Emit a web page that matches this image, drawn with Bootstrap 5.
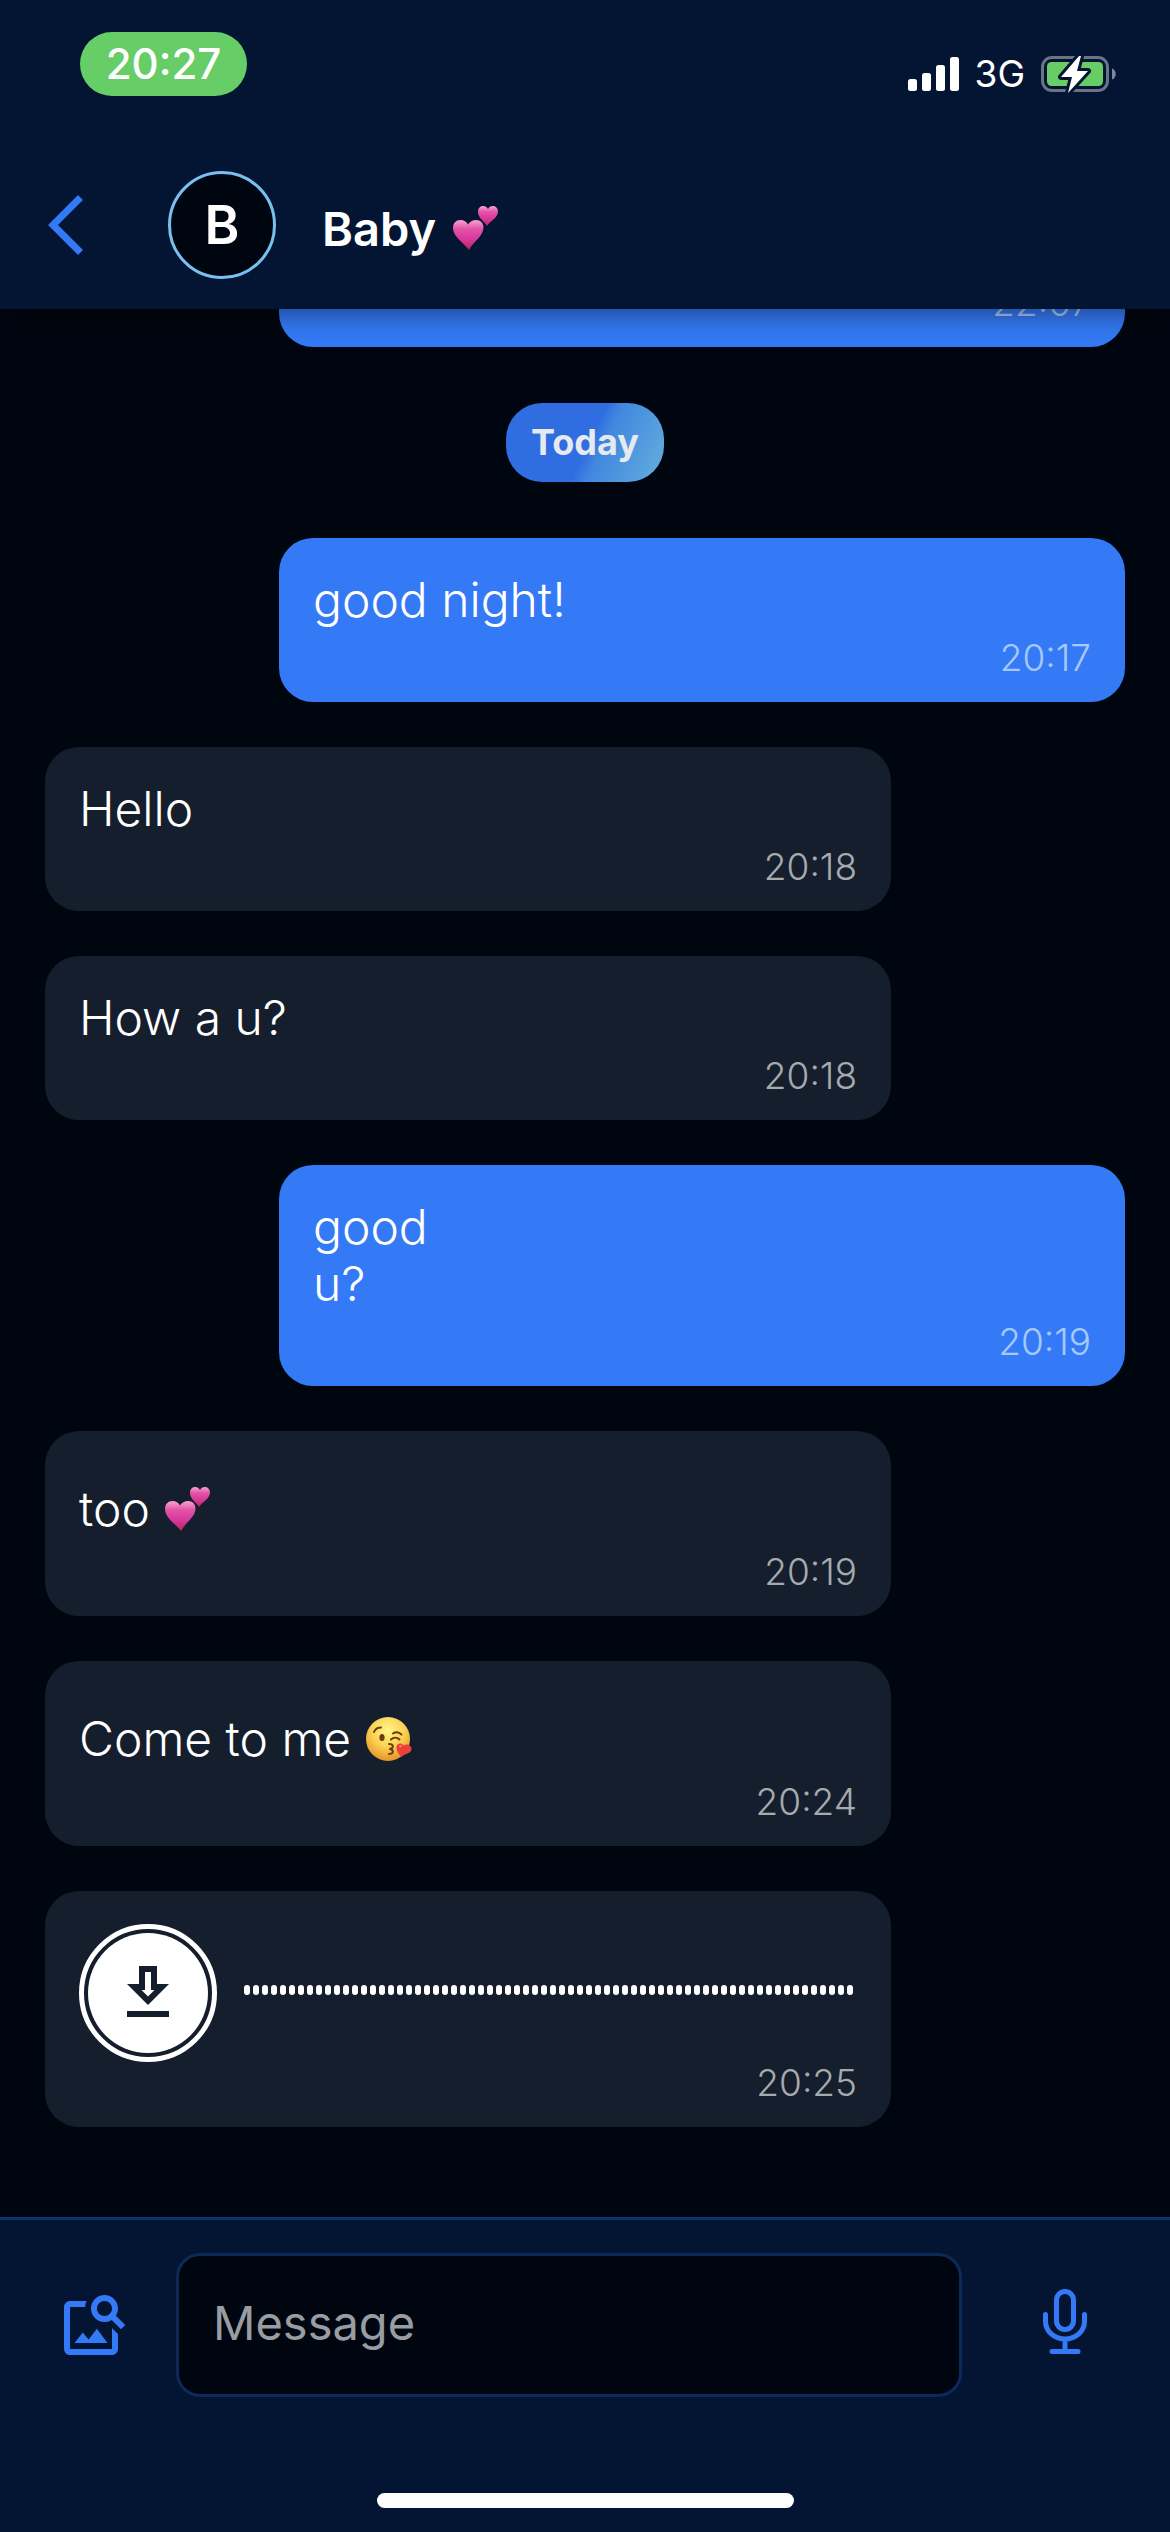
<!DOCTYPE html>
<html lang="en">
<head>
<meta charset="utf-8">
<meta name="viewport" content="width=device-width, initial-scale=1">
<title>Baby – Chat</title>
<link href="https://cdn.jsdelivr.net/npm/bootstrap@5.3.0/dist/css/bootstrap.min.css" rel="stylesheet">
<style>
  :root {
    --bg: #000610;
    --panel: #041533;
    --accent: #347af6;
    --incoming: #151e2c;
  }
  body { background: var(--bg); color: #fff; font-family: Inter, "Liberation Sans", sans-serif; }
  svg { display: block; flex: none; }

  .app-header { background: var(--panel); box-shadow: 0 0 30px rgba(0, 0, 0, .6); z-index: 2; }
  .status-bar { padding: 32px 53px 0 80px; height: 120px; }
  .clock-pill { background: #67cd67; border-radius: 32px; width: 167px; height: 64px; font-size: 42px; line-height: 64px; font-weight: 500; }
  .status-icons { gap: 16px; height: 84px; font-size: 37px; line-height: 44px; }
  .title-bar { padding: 51px 48px 30px; }
  .back-btn { width: 120px; }
  .avatar { width: 108px; height: 108px; border: 3px solid #78c0f0; background: var(--bg); font-size: 53px; line-height: 56px; font-weight: 600; }
  .contact-name { font-size: 47px; line-height: 57px; font-weight: 600; margin: 6px 0 0 46px; gap: 17px; }

  .chat { gap: 45px; padding-bottom: 90px; }
  .msg-row { width: 80%; padding: 0 45px; flex: none; }
  .bubble { border-radius: 34px; padding: 33px 34px 23px; background: var(--incoming); }
  .bubble-out { background: var(--accent); }
  .bubble-text { font-size: 48px; line-height: 57px; font-weight: 300; }
  .bubble-emoji { padding: 16px 0 5px; gap: 15px; }
  .bubble-time { font-size: 37px; line-height: 43px; font-weight: 300; margin-top: 8px; color: #a5aaaf; }
  .bubble-out .bubble-time { color: #a6c9fb; }
  .day-pill { margin: 11px 0; padding: 0 25px; border-radius: 36px; font-size: 36px; line-height: 79px; font-weight: 700; color: #e6e9ee;
    background: linear-gradient(115deg, #2f6de0 52%, #4187df 60%, #65afdd 100%); }

  .voice { gap: 27px; margin-bottom: -9px; }
  .download-btn { width: 138px; height: 138px; border: 5px solid #fff; padding: 4px; background: transparent; color: var(--incoming); }
  .download-disc { background: #fff; }
  .waveform { padding: 0 3px 7px 0; }

  .composer { background: var(--panel); border-top: 3px solid #10316b; padding: 33px 0 24px; }
  .composer-row { margin: 0 70px 96px 58px; gap: 46px; }
  .icon-btn { color: var(--accent); }
  .composer .form-control { height: 144px; border: 3px solid #0d2958; border-radius: 24px; background: var(--bg); color: #fff; font-size: 47px; line-height: 57px; padding: 0 34px 6px; }
  .composer .form-control::placeholder { color: #999ca1; opacity: 1; }
  .mic-btn { margin-left: 24px; }
  .home-bar { width: 417px; height: 15px; background: #fff; }
</style>
</head>
<body class="vh-100 d-flex flex-column overflow-hidden">

<svg width="0" height="0" class="position-absolute" aria-hidden="true">
  <defs>
    <linearGradient id="pink" x1="0" y1="0" x2="0" y2="1">
      <stop offset="0" stop-color="#f9a3d2"/><stop offset=".3" stop-color="#e254a8"/>
      <stop offset=".65" stop-color="#d9379b"/><stop offset="1" stop-color="#b32a55"/>
    </linearGradient>
    <radialGradient id="face" cx=".5" cy=".3" r=".75">
      <stop offset="0" stop-color="#fff58a"/><stop offset=".5" stop-color="#fbd153"/><stop offset="1" stop-color="#e18b22"/>
    </radialGradient>
    <symbol id="hearts" viewBox="0 0 45 44">
      <path fill="url(#pink)" d="M16 44C11 37 0 31 0 22c0-5 3-8 7.500-8 3.500 0 6 1.500 7.500 4.500C17 15.500 19.500 14 23 14c4.500 0 7.500 3 7.500 7.500C30.500 30 20 36 16 44z"/>
      <path fill="url(#pink)" d="M34 20c-2.500-4.500-9-8-9-14 0-3.500 2-6 5-6 2.300 0 4 1 5 3 1-2 2.700-3 5-3 3 0 5 2.500 5 5.500C45 12 37 15 34 20z"/>
    </symbol>
    <symbol id="kiss" viewBox="0 0 46 44">
      <circle cx="22" cy="22" r="22" fill="url(#face)"/>
      <ellipse cx="16" cy="20.500" rx="2.600" ry="3.500" fill="#6b3c0c"/>
      <g fill="none" stroke="#6b3c0c" stroke-width="2" stroke-linecap="round" stroke-linejoin="round">
        <path d="M8 15c1-2.500 4-4.500 7-4.500M27 16.500c3-2 6-1.500 8.500 1M25 22.500c2.500-2.500 6-2.500 8.500 0M23 27c5 0 5 4 1 5 4 1 4 5-1 5"/>
      </g>
      <path fill="#ea4238" d="M35 40c-2-3-5-6-4.500-10.500.5-3 4.500-4.500 7-1 3-2.500 8-.5 8 3.500 0 4.500-7 5-10.500 8z"/>
      <path fill="#ff8c80" d="M33 29c1-1 2.500-1 3 .5-1 1-2.500 1-3-.5z"/>
    </symbol>
  </defs>
</svg>

<header class="app-header position-relative">
  <div class="status-bar d-flex justify-content-between align-items-start">
    <div class="clock-pill text-center">20:27</div>
    <div class="status-icons d-flex align-items-center">
      <svg width="51" height="34" viewBox="0 0 51 34" fill="#fff" role="img" aria-label="Signal strength">
        <rect x="0" y="22" width="9" height="12" rx="2.500"/><rect x="14" y="16" width="9" height="18" rx="2.500"/>
        <rect x="28" y="8" width="9" height="26" rx="2.500"/><rect x="42" y="0" width="9" height="34" rx="2.500"/>
      </svg>
      <span>3G</span>
      <svg width="76" height="38" viewBox="0 0 76 38" role="img" aria-label="Battery charging">
        <rect x="1.500" y="2.500" width="65" height="33" rx="9.500" fill="none" stroke="#6b7487" stroke-width="3"/>
        <path fill="#7f8898" d="M71 13.500c5 1.500 5 9.500 0 11z"/>
        <rect x="6" y="7" width="56" height="24" rx="4.500" fill="#67cd67"/>
        <path d="M38 1 20 22h11l-4 16 20-22H36l4-15z" fill="#fff" stroke="#041533" stroke-width="6" stroke-linejoin="round" paint-order="stroke"/>
      </svg>
    </div>
  </div>
  <div class="title-bar d-flex align-items-center">
    <button type="button" class="back-btn btn p-0 border-0 rounded-0" aria-label="Back">
      <svg width="36" height="60" viewBox="0 0 36 60" fill="none" stroke="#347af6" stroke-width="7"><path d="M32.500 2.500 5 30l27.500 27.500"/></svg>
    </button>
    <div class="avatar rounded-circle d-flex align-items-center justify-content-center">B</div>
    <h1 class="contact-name mb-0 d-flex align-items-center">Baby
      <svg width="45" height="44" role="img" aria-label="two hearts"><use href="#hearts"/></svg>
    </h1>
  </div>
</header>

<main class="chat flex-grow-1 d-flex flex-column justify-content-end align-items-start overflow-hidden">
  <div class="msg-row align-self-end"><div class="bubble bubble-out">
    <div class="bubble-text">&nbsp;</div>
    <div class="bubble-time text-end">22:07</div>
  </div></div>

  <div class="day-pill align-self-center">Today</div>

  <div class="msg-row align-self-end"><div class="bubble bubble-out">
    <div class="bubble-text">good night!</div>
    <div class="bubble-time text-end">20:17</div>
  </div></div>

  <div class="msg-row"><div class="bubble">
    <div class="bubble-text">Hello</div>
    <div class="bubble-time text-end">20:18</div>
  </div></div>

  <div class="msg-row"><div class="bubble">
    <div class="bubble-text">How a u?</div>
    <div class="bubble-time text-end">20:18</div>
  </div></div>

  <div class="msg-row align-self-end"><div class="bubble bubble-out">
    <div class="bubble-text">good<br>u?</div>
    <div class="bubble-time text-end">20:19</div>
  </div></div>

  <div class="msg-row"><div class="bubble">
    <div class="bubble-text bubble-emoji d-flex align-items-center">too
      <svg width="45" height="44" role="img" aria-label="two hearts"><use href="#hearts"/></svg>
    </div>
    <div class="bubble-time text-end">20:19</div>
  </div></div>

  <div class="msg-row"><div class="bubble">
    <div class="bubble-text bubble-emoji d-flex align-items-center">Come to me
      <svg width="46" height="44" role="img" aria-label="face blowing a kiss"><use href="#kiss"/></svg>
    </div>
    <div class="bubble-time text-end">20:24</div>
  </div></div>

  <div class="msg-row"><div class="bubble">
    <div class="voice d-flex align-items-center">
      <button type="button" class="download-btn btn rounded-circle flex-shrink-0" aria-label="Download voice message">
        <span class="download-disc rounded-circle w-100 h-100 d-flex align-items-center justify-content-center">
          <svg width="72" height="72" viewBox="0 0 24 24" fill="currentColor"><path d="M19 9h-4V3H9v6H5l7 7 7-7zm-8 2V5h2v6h1.170L12 13.170 9.830 11H11zm-6 7h14v2H5z"/></svg>
        </span>
      </button>
      <div class="waveform flex-grow-1">
        <svg width="100%" height="10" aria-hidden="true">
          <defs><pattern id="dots" width="9" height="10" patternUnits="userSpaceOnUse"><rect width="6" height="10" rx="3" fill="#fff"/></pattern></defs>
          <rect width="100%" height="10" fill="url(#dots)"/>
        </svg>
      </div>
    </div>
    <div class="bubble-time text-end">20:25</div>
  </div></div>
</main>

<footer class="composer">
  <form class="composer-row d-flex align-items-center">
    <button type="button" class="icon-btn btn p-0 border-0" aria-label="Attach image">
      <svg width="72" height="72" viewBox="0 0 24 24" fill="currentColor"><path d="M18 13v7H4V6h5.020c.050-.710.220-1.380.480-2H4c-1.100 0-2 .9-2 2v14c0 1.100.9 2 2 2h14c1.100 0 2-.9 2-2v-5l-2-2zm-1.500 5h-11l2.750-3.530 1.960 2.360 2.750-3.540zm2.800-9.110c.440-.7.700-1.510.700-2.390C20 4.010 17.990 2 15.500 2S11 4.010 11 6.500s2.010 4.500 4.490 4.500c.880 0 1.700-.260 2.390-.7L21 13.420 22.420 12 19.300 8.890zM15.500 9C14.120 9 13 7.880 13 6.500S14.120 4 15.500 4 18 5.120 18 6.500 16.880 9 15.500 9z"/></svg>
    </button>
    <input type="text" class="form-control shadow-none" placeholder="Message" aria-label="Message">
    <button type="button" class="icon-btn mic-btn btn p-0 border-0" aria-label="Record voice message">
      <svg width="68" height="72" viewBox="0 0 68 72" fill="none" stroke="currentColor" stroke-width="5" stroke-linecap="round">
        <rect x="24.500" y="2.500" width="17" height="38" rx="8.500"/>
        <path d="M13.500 25.500v7a19.500 17.500 0 0 0 39 0v-7M33 51v11M20 62.500h26"/>
      </svg>
    </button>
  </form>
  <div class="home-bar rounded-pill mx-auto"></div>
</footer>

<script src="https://cdn.jsdelivr.net/npm/bootstrap@5.3.0/dist/js/bootstrap.bundle.min.js"></script>
</body>
</html>
